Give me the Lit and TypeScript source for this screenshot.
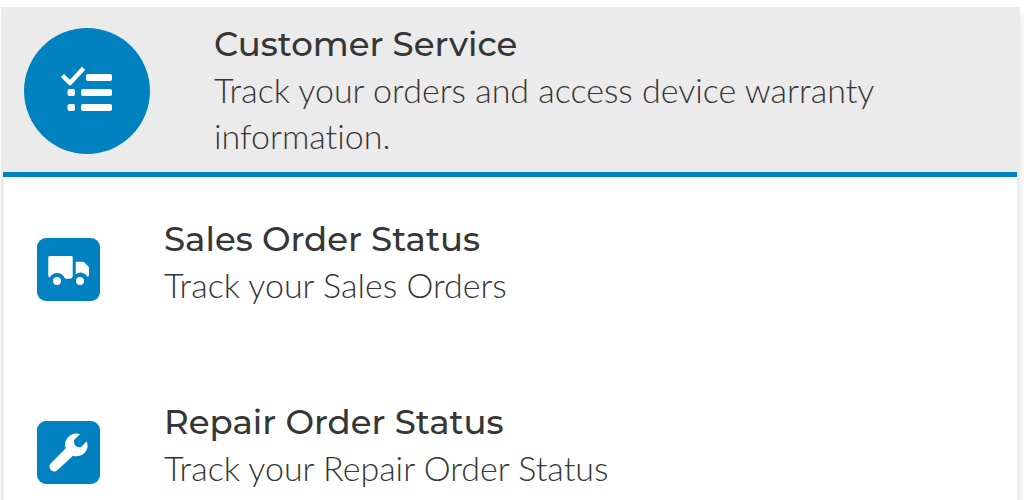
import { LitElement, html, css, svg } from "lit";
import { customElement } from "lit/decorators.js";

const checklistIcon = svg`
  <path d="M40 49 46 55 58 42" fill="none" stroke="#fff" stroke-width="4.500" stroke-linecap="square" stroke-linejoin="round"/>
  <g fill="#fff">
    <rect x="62" y="46" width="26" height="7" rx="2"/>
    <rect x="57" y="61" width="31" height="7" rx="2"/>
    <rect x="57" y="76" width="31" height="7" rx="2"/>
    <rect x="43.500" y="61" width="7.500" height="7" rx="2"/>
    <rect x="43.500" y="76" width="7.500" height="7" rx="2"/>
  </g>`;

const truckIcon = svg`
  <g fill="#fff">
    <path d="M12.500 18H34.500Q35.700 18 35.700 19.200V37.500Q35.700 40.700 32.500 40.700H29.500Q27.800 40.700 27.300 39.500A8 8 0 0 0 12.800 39.500Q11.300 39.500 11.300 37.500V19.200Q11.300 18 12.500 18Z"/>
    <path d="M40 23.700H45.500Q46.500 23.700 47.200 24.300L51.300 28.200Q52 29 52 30V37Q52 39 50.500 38.800A8 8 0 0 0 38.700 36.200V25Q38.700 23.700 40 23.700Z"/>
    <circle cx="20" cy="43" r="4"/>
    <circle cx="43" cy="43" r="4"/>
  </g>`;

const wrenchIcon = svg`
  <path fill="#fff" d="M43 13.200 36.800 19.200Q37 23 38.500 24.700T43.800 26.200L49.700 20.200C51.500 25.500 50.300 29.300 47.200 32.200C44 35.200 39.700 35.900 36 34.700L20.200 49.300C16 53 9.700 47 13.700 42.500L28.800 27.200C27.300 23 28.300 19 31.300 16C34.500 12.800 39 11.800 43 13.200Z"/>`;

const services = [
  { title: "Sales Order Status", text: "Track your Sales Orders", icon: truckIcon },
  { title: "Repair Order Status", text: "Track your Repair Order Status", icon: wrenchIcon },
];

@customElement("app-root")
export class AppRoot extends LitElement {
  static styles = css`
    :host {
      display: block;
      height: 100vh;
      overflow: hidden;
      background: #fff;
      color: #363636;
      font-family: Lato, sans-serif;
    }
    .page { padding: 7px 4px 0 1px; }
    .panel {
      border: solid #ebebeb;
      border-width: 0 3px;
      box-shadow: 2px 6px 8px rgba(0, 0, 0, 0.08);
    }
    .head {
      display: flex;
      gap: 64px;
      margin-left: -1px;
      padding: 15px 20px 12px 21px;
      background: #ebebeb;
      border-bottom: 5px solid #0082c0;
    }
    .badge {
      flex: none;
      width: 126px;
      height: 126px;
      margin-top: 6px;
      border-radius: 50%;
      background: #0082c0;
    }
    .copy { flex: 1; max-width: 720px; }
    h1, h2 {
      margin: 0;
      font: 500 34px/45px Montserrat, Inter, sans-serif;
    }
    p {
      margin: 0 0 1px;
      font-size: 34px;
      font-weight: 300;
      line-height: 46px;
      font-variant-ligatures: none;
    }
    ul {
      list-style: none;
      margin: 0;
      padding: 40px 33px;
      display: grid;
      gap: 91px;
    }
    .item { display: flex; align-items: flex-start; gap: 64px; }
    .tile {
      flex: none;
      width: 63px;
      height: 63px;
      margin-top: 21px;
      border-radius: 9px;
      background: #0082c0;
    }
  `;

  render() {
    return html`
      <main class="page">
        <section class="panel">
          <header class="head">
            <svg class="badge" viewBox="0 0 126 126" aria-hidden="true">${checklistIcon}</svg>
            <div class="copy">
              <h1>Customer Service</h1>
              <p>Track your orders and access device warranty information.</p>
            </div>
          </header>
          <ul>
            ${services.map((s) => html`
              <li class="item">
                <svg class="tile" viewBox="0 0 63 63" aria-hidden="true">${s.icon}</svg>
                <div>
                  <h2>${s.title}</h2>
                  <p>${s.text}</p>
                </div>
              </li>`)}
          </ul>
        </section>
      </main>
    `;
  }
}
